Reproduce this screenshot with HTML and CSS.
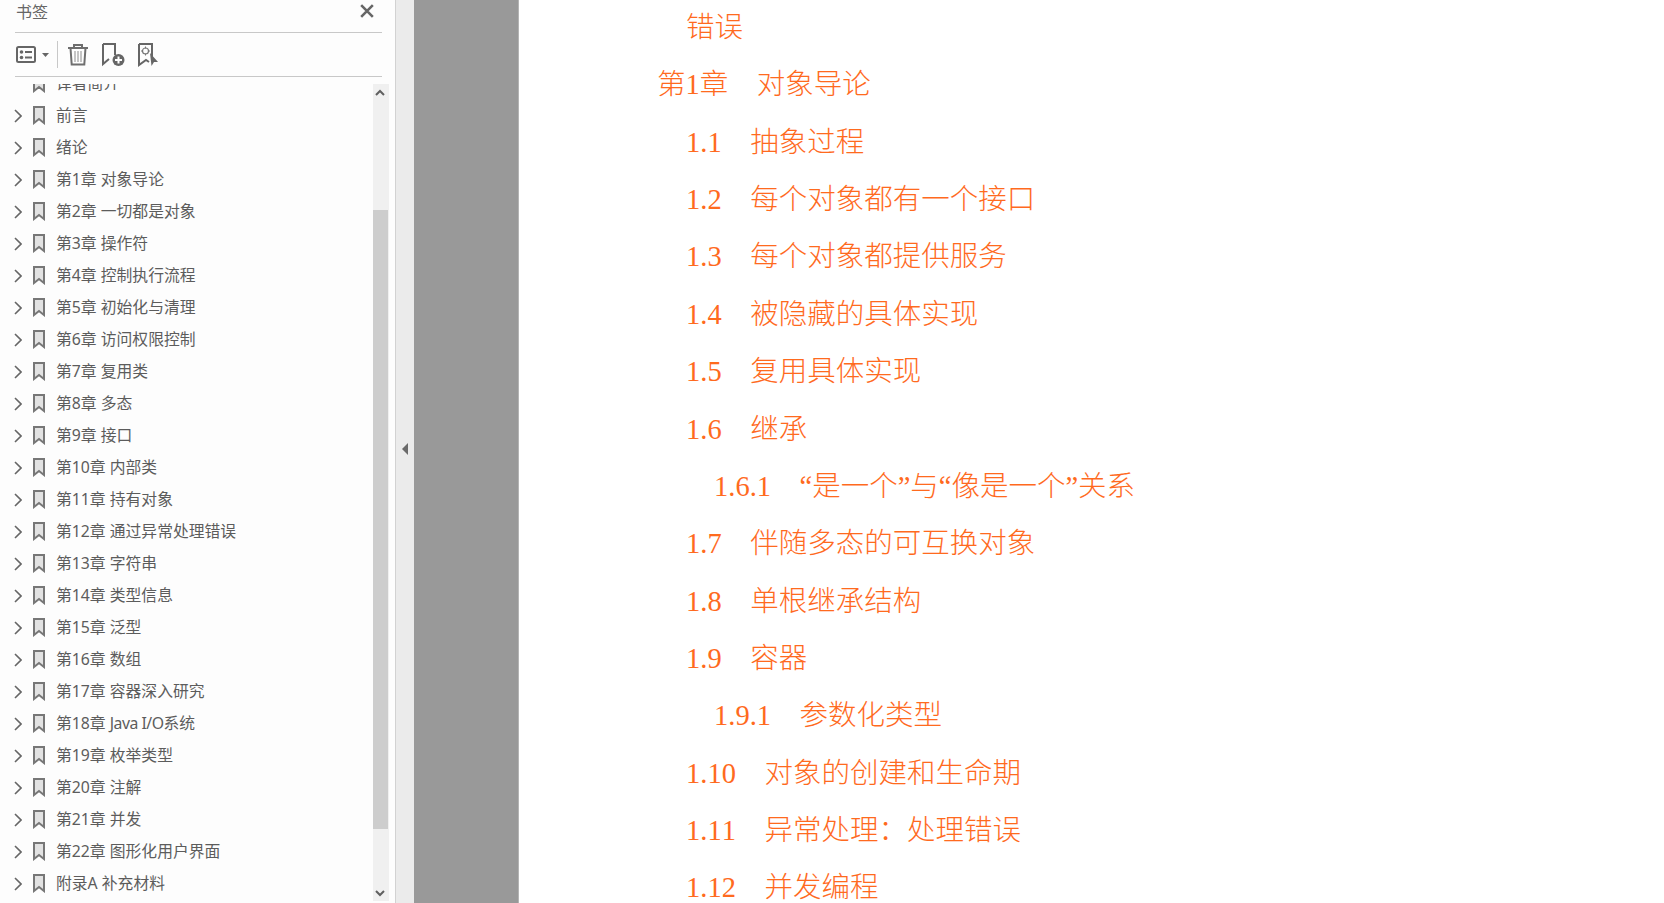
FILE: index.html
```html
<!DOCTYPE html>
<html lang="zh-CN">
<head>
  <meta charset="UTF-8" />
  <title>书签</title>
  <link rel="stylesheet" href="styles.css">
</head>
<body>

  <svg class="symbols" xmlns="http://www.w3.org/2000/svg">
    <symbol id="bookmark" viewBox="0 0 12 19">
      <path d="M1 1h10v16l-5-4-5 4z" fill="#e2e2e2" stroke="#777" stroke-width="2" />
    </symbol>
    <symbol id="chevron" viewBox="0 0 8 14">
      <path d="M1 1l6 6-6 6" fill="none" stroke="#666" stroke-width="1.6" />
    </symbol>
  </svg>

  <div class="app">
    <aside class="sidebar">
      <div class="panel-title">
        <span>书签</span>
        <svg class="close" viewBox="0 0 12 12">
          <path d="M1 1l10 10M11 1L1 11" stroke="#666" stroke-width="2.2" fill="none" />
        </svg>
      </div>

      <div class="toolbar">
        <svg class="tool-options" viewBox="0 0 34 18">
          <rect x="1" y="1" width="18" height="15" rx="1.5" fill="none" stroke="#666" stroke-width="2" />
          <circle cx="5.5" cy="6" r="1.8" fill="#666" />
          <circle cx="5.5" cy="11.5" r="1.8" fill="#666" />
          <path d="M9 6h7M9 11.5h7" stroke="#666" stroke-width="2" />
          <path d="M26 7h7l-3.5 4z" fill="#666" />
        </svg>
        <div class="tool-sep"></div>
        <svg class="tool-trash" viewBox="0 0 22 23">
          <path d="M1 5h20M7 5V2h8v3" fill="none" stroke="#6e6e6e" stroke-width="2" />
          <path d="M3.500 5l1.200 16.500h12.600L18.500 5" fill="none" stroke="#6e6e6e" stroke-width="2" />
          <path d="M8 8v11M11 8v11M14 8v11" stroke="#8c8c8c" stroke-width="1" />
        </svg>
        <svg class="tool-add" viewBox="0 0 23 24">
          <path d="M1 1h12v11M1 1v20l6-5" fill="none" stroke="#666" stroke-width="2" />
          <circle cx="16.5" cy="17" r="6" fill="#666" />
          <path d="M13 17h7M16.5 13.5v7" stroke="#fff" stroke-width="2" />
        </svg>
        <svg class="tool-target" viewBox="0 0 21 24">
          <path d="M1 1h13v13M1 1v21l7-5 3 2" fill="none" stroke="#666" stroke-width="2" />
          <circle cx="7.5" cy="8" r="3" fill="none" stroke="#777" stroke-width="1.2" />
          <path d="M7.500 3.500v2M7.500 10.500v2M3 8h2M10 8h2" stroke="#777" stroke-width="1" />
          <path d="M12 10l8 9h-4l-2.500 4z" fill="#666" />
        </svg>
      </div>

      <div class="tree">
        <ul class="tree-list">
          <li><span class="no-arrow"></span><svg class="bm"><use href="#bookmark" /></svg>译者简介</li>
          <li><svg class="arrow"><use href="#chevron" /></svg><svg class="bm"><use href="#bookmark" /></svg>前言</li>
          <li><svg class="arrow"><use href="#chevron" /></svg><svg class="bm"><use href="#bookmark" /></svg>绪论</li>
          <li><svg class="arrow"><use href="#chevron" /></svg><svg class="bm"><use href="#bookmark" /></svg>第1章 对象导论</li>
          <li><svg class="arrow"><use href="#chevron" /></svg><svg class="bm"><use href="#bookmark" /></svg>第2章 一切都是对象</li>
          <li><svg class="arrow"><use href="#chevron" /></svg><svg class="bm"><use href="#bookmark" /></svg>第3章 操作符</li>
          <li><svg class="arrow"><use href="#chevron" /></svg><svg class="bm"><use href="#bookmark" /></svg>第4章 控制执行流程</li>
          <li><svg class="arrow"><use href="#chevron" /></svg><svg class="bm"><use href="#bookmark" /></svg>第5章 初始化与清理</li>
          <li><svg class="arrow"><use href="#chevron" /></svg><svg class="bm"><use href="#bookmark" /></svg>第6章 访问权限控制</li>
          <li><svg class="arrow"><use href="#chevron" /></svg><svg class="bm"><use href="#bookmark" /></svg>第7章 复用类</li>
          <li><svg class="arrow"><use href="#chevron" /></svg><svg class="bm"><use href="#bookmark" /></svg>第8章 多态</li>
          <li><svg class="arrow"><use href="#chevron" /></svg><svg class="bm"><use href="#bookmark" /></svg>第9章 接口</li>
          <li><svg class="arrow"><use href="#chevron" /></svg><svg class="bm"><use href="#bookmark" /></svg>第10章 内部类</li>
          <li><svg class="arrow"><use href="#chevron" /></svg><svg class="bm"><use href="#bookmark" /></svg>第11章 持有对象</li>
          <li><svg class="arrow"><use href="#chevron" /></svg><svg class="bm"><use href="#bookmark" /></svg>第12章 通过异常处理错误</li>
          <li><svg class="arrow"><use href="#chevron" /></svg><svg class="bm"><use href="#bookmark" /></svg>第13章 字符串</li>
          <li><svg class="arrow"><use href="#chevron" /></svg><svg class="bm"><use href="#bookmark" /></svg>第14章 类型信息</li>
          <li><svg class="arrow"><use href="#chevron" /></svg><svg class="bm"><use href="#bookmark" /></svg>第15章 泛型</li>
          <li><svg class="arrow"><use href="#chevron" /></svg><svg class="bm"><use href="#bookmark" /></svg>第16章 数组</li>
          <li><svg class="arrow"><use href="#chevron" /></svg><svg class="bm"><use href="#bookmark" /></svg>第17章 容器深入研究</li>
          <li><svg class="arrow"><use href="#chevron" /></svg><svg class="bm"><use href="#bookmark" /></svg>第18章&nbsp;<span class="latin">Java I/O</span>系统</li>
          <li><svg class="arrow"><use href="#chevron" /></svg><svg class="bm"><use href="#bookmark" /></svg>第19章 枚举类型</li>
          <li><svg class="arrow"><use href="#chevron" /></svg><svg class="bm"><use href="#bookmark" /></svg>第20章 注解</li>
          <li><svg class="arrow"><use href="#chevron" /></svg><svg class="bm"><use href="#bookmark" /></svg>第21章 并发</li>
          <li><svg class="arrow"><use href="#chevron" /></svg><svg class="bm"><use href="#bookmark" /></svg>第22章 图形化用户界面</li>
          <li><svg class="arrow"><use href="#chevron" /></svg><svg class="bm"><use href="#bookmark" /></svg>附录A 补充材料</li>
        </ul>

        <div class="scrollbar">
          <svg class="scroll-btn" viewBox="0 0 16 16"><path d="M3 11l4-4 4 4" fill="none" stroke="#606060" stroke-width="2" /></svg>
          <div class="scroll-track"><div class="scroll-thumb"></div></div>
          <svg class="scroll-btn" viewBox="0 0 16 16"><path d="M3 6l4 4 4-4" fill="none" stroke="#606060" stroke-width="2" /></svg>
        </div>
      </div>
    </aside>

    <div class="splitter">
      <div class="collapse"></div>
    </div>

    <div class="gutter"></div>

    <main class="page">
      <p class="lv1">错误</p>
      <p class="lv0">第1章　对象导论</p>
      <p class="lv1">1.1　抽象过程</p>
      <p class="lv1">1.2　每个对象都有一个接口</p>
      <p class="lv1">1.3　每个对象都提供服务</p>
      <p class="lv1">1.4　被隐藏的具体实现</p>
      <p class="lv1">1.5　复用具体实现</p>
      <p class="lv1">1.6　继承</p>
      <p class="lv2">1.6.1　“是一个”与“像是一个”关系</p>
      <p class="lv1">1.7　伴随多态的可互换对象</p>
      <p class="lv1">1.8　单根继承结构</p>
      <p class="lv1">1.9　容器</p>
      <p class="lv2">1.9.1　参数化类型</p>
      <p class="lv1">1.10　对象的创建和生命期</p>
      <p class="lv1">1.11　异常处理：处理错误</p>
      <p class="lv1">1.12　并发编程</p>
    </main>
  </div>

</body>
</html>
```

FILE: styles.css
```css
* {
  box-sizing: border-box;
}

html, body {
  margin: 0;
  height: 100%;
  overflow: hidden;
}

body {
  font-family: "Noto Sans", "Noto Sans CJK SC", sans-serif;
  background-color: #fff;
}

.symbols {
  display: none;
}

.app {
  display: flex;
  height: 903px;
}

/* Bookmarks panel */
.sidebar {
  width: 395px;
  flex: none;
  display: flex;
  flex-direction: column;
  background-color: #fdfdfd;
}

.panel-title {
  height: 33px;
  flex: none;
  margin: 0 13px 0 15px;
  padding: 0 1px 0 1px;
  border-bottom: 1px solid #c8c8c8;
  display: flex;
  align-items: center;
  justify-content: space-between;
  font-size: 16px;
  color: #666;
}

.close {
  width: 14px;
  height: 14px;
  margin: 0 7px 10px 0;
  align-self: center;
}

.panel-title span {
  margin-bottom: 10px;
}

.toolbar {
  height: 44px;
  flex: none;
  margin: 0 13px 0 15px;
  padding-left: 1px;
  border-bottom: 1px solid #c8c8c8;
  display: flex;
  align-items: center;
}

.tool-options {
  width: 34px;
  height: 18px;
}

.tool-sep {
  width: 1px;
  height: 27px;
  margin: 0 9px 0 7px;
  background-color: #c8c8c8;
}

.tool-trash {
  width: 22px;
  height: 23px;
  margin-right: 13px;
}

.tool-add {
  width: 23px;
  height: 24px;
  margin-right: 13px;
}

.tool-target {
  width: 21px;
  height: 24px;
}

.tree {
  flex: 1;
  min-height: 0;
  margin-top: 7px;
  display: flex;
  overflow: hidden;
}

.tree-list {
  list-style: none;
  margin: -18px 0 0;
  padding: 0;
  width: 373px;
  flex: none;
}

.tree-list li {
  height: 32.04px;
  display: flex;
  align-items: center;
  padding-left: 14px;
  font-size: 15.8px;
  color: #5c5c5c;
  white-space: pre;
}

.latin {
  letter-spacing: -0.5px;
}

.arrow, .no-arrow {
  width: 8px;
  height: 14px;
  flex: none;
  margin: 3px 11px 0 0;
}

.bm {
  width: 12px;
  height: 19px;
  flex: none;
  margin: 2px 11px 0 0;
}

.scrollbar {
  width: 16px;
  height: 817px;
  flex: none;
  display: flex;
  flex-direction: column;
  background-color: #f0f0f0;
}

.scroll-btn {
  width: 16px;
  height: 16px;
  flex: none;
}

.scroll-track {
  flex: 1;
  padding-top: 110px;
  padding-bottom: 56px;
  display: flex;
}

.scroll-thumb {
  width: 15px;
  background-color: #cdcdcd;
}

/* Drag bar between panel and page */
.splitter {
  width: 19px;
  flex: none;
  border-left: 1px solid #d2d2d2;
  background-color: #ebebeb;
  display: flex;
  align-items: center;
  justify-content: center;
}

.collapse {
  width: 0;
  height: 0;
  margin: 0 0 6px 0;
  border-top: 6px solid transparent;
  border-bottom: 6px solid transparent;
  border-right: 6px solid #6a6a6a;
}

.gutter {
  width: 105px;
  flex: none;
  background-color: #999;
  border-right: 1px solid #b4b4b4;
}

/* Contents page */
.page {
  flex: 1;
  margin-top: -1px;
  font-family: "Liberation Serif", "Noto Sans CJK SC", serif;
  font-size: 28.5px;
  font-weight: 300;
  font-kerning: none;
  color: #ff6a1e;
  white-space: nowrap;
}

.page p {
  margin: 0;
  height: 57.37px;
  line-height: 57.37px;
}

.lv0 {
  padding-left: 138px;
}

.lv1 {
  padding-left: 167px;
}

.lv2 {
  padding-left: 195px;
}
```
